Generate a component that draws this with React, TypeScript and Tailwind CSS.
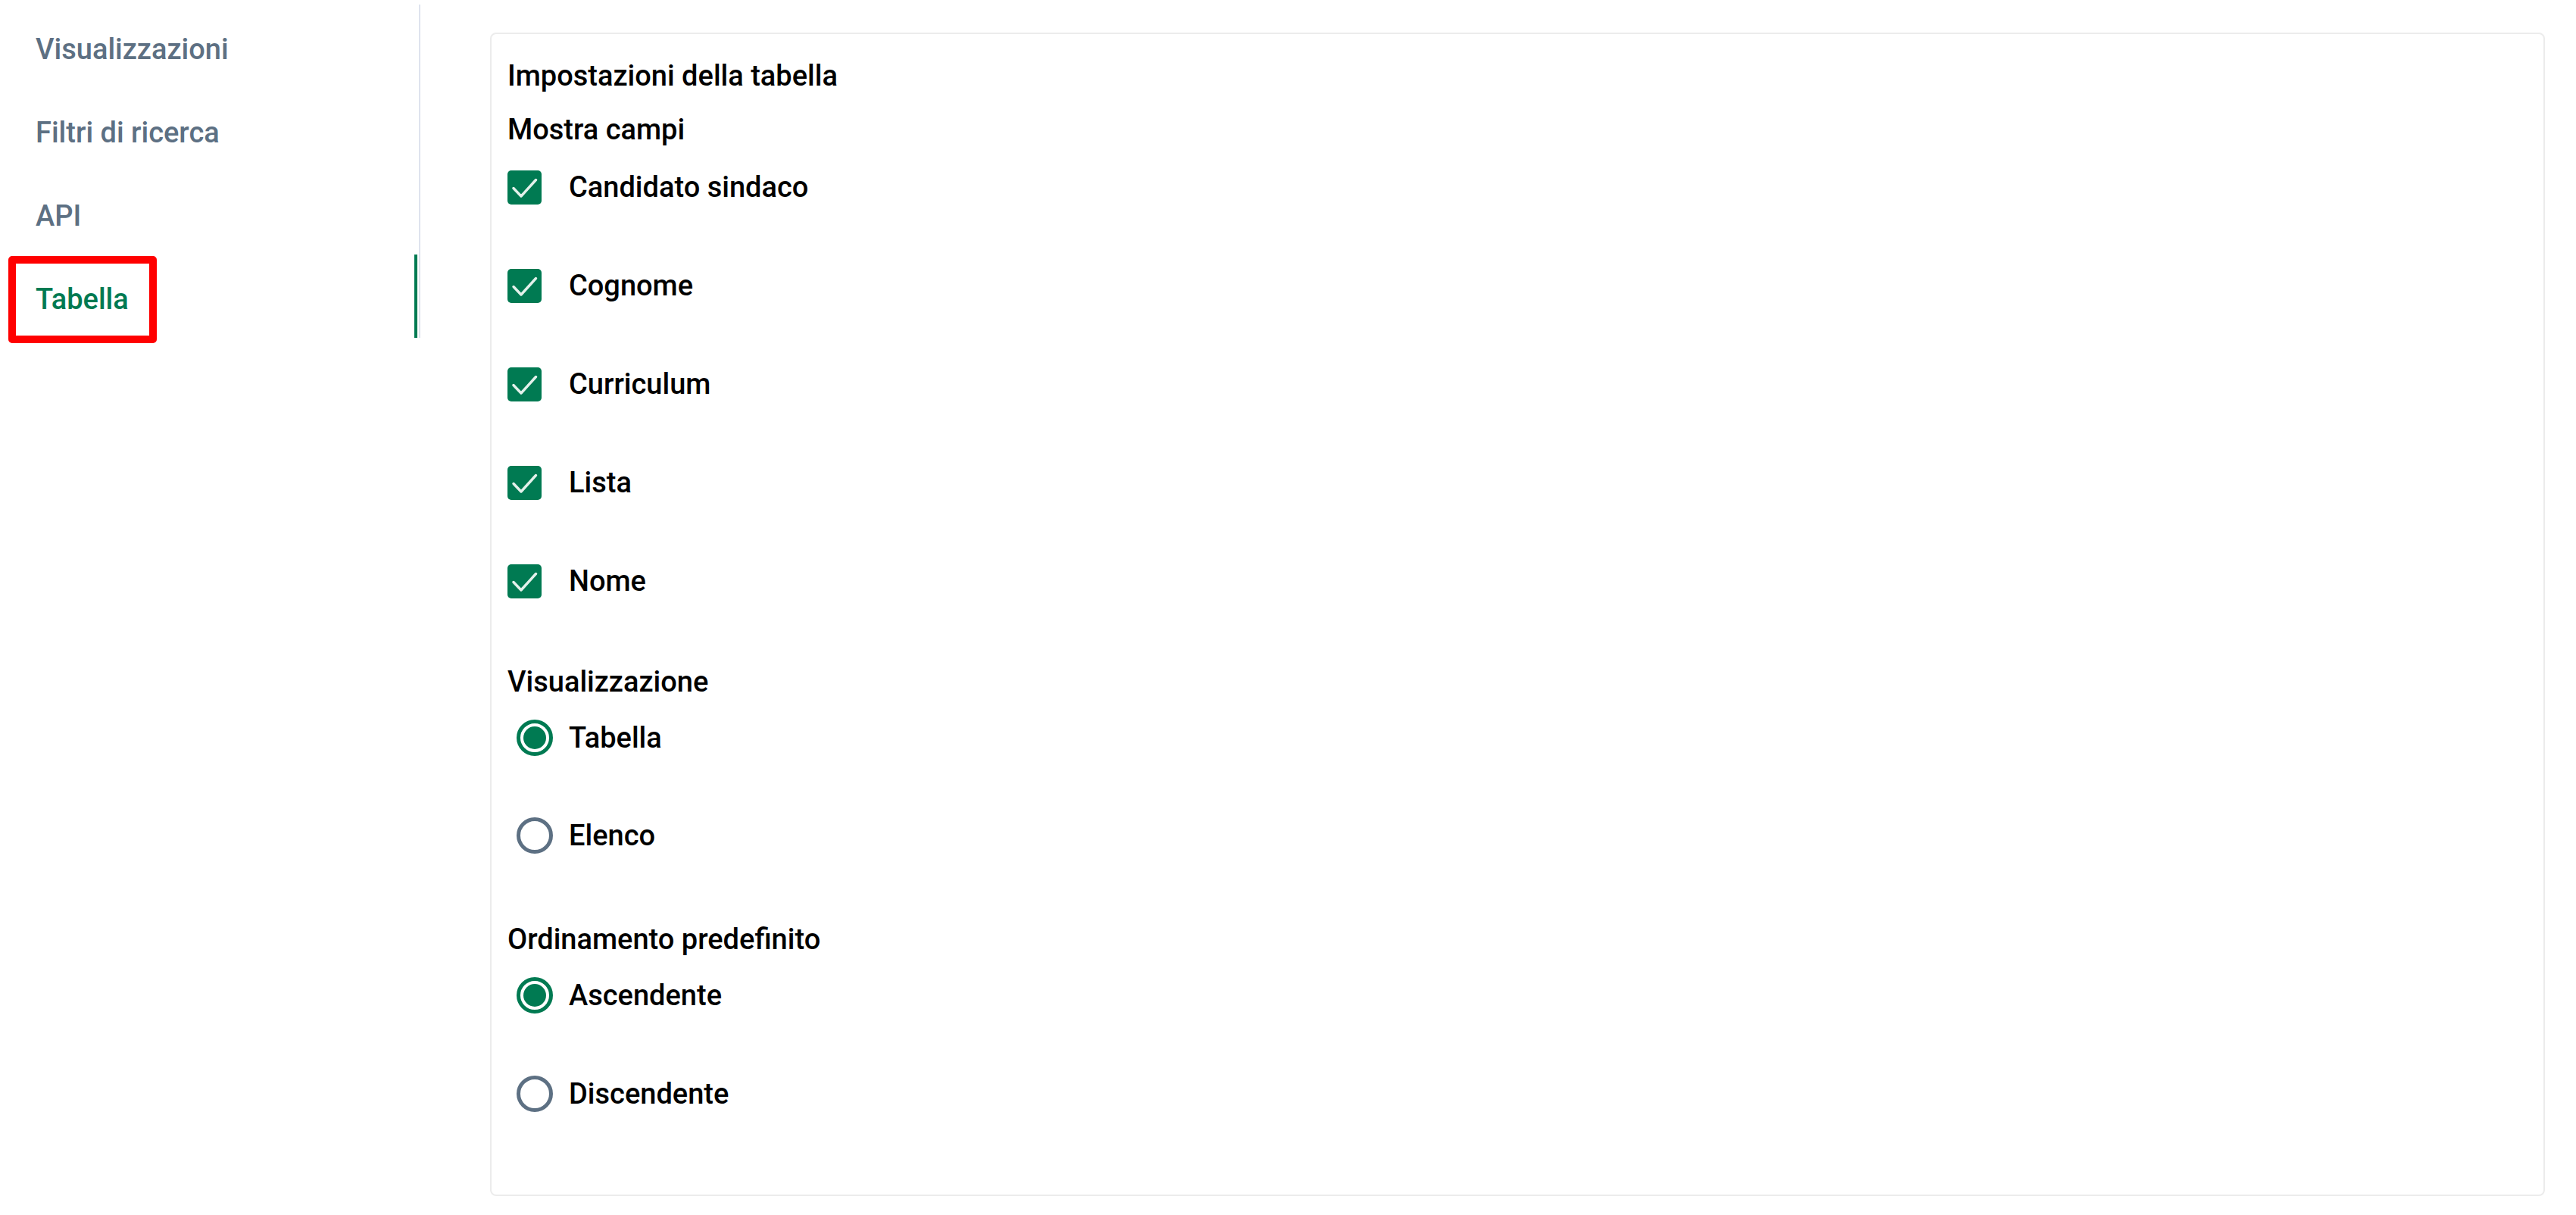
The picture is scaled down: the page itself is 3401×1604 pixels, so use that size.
import { useState } from "react"

const navItems = ["Visualizzazioni", "Filtri di ricerca", "API", "Tabella"]

const fields = ["Candidato sindaco", "Cognome", "Curriculum", "Lista", "Nome"]

function CheckboxRow({ label }: { label: string }) {
  return (
    <label className="flex h-[60px] items-center">
      <span className="flex h-[45px] w-[45px] shrink-0 items-center justify-center rounded-[5px] bg-[#007a52]">
        <svg width="45" height="45" viewBox="0 0 45 45" fill="none">
          <polyline
            points="8,23.5 18,34 37.5,12.5"
            stroke="#e3f1eb"
            strokeWidth="3.4"
            strokeLinecap="round"
            strokeLinejoin="round"
          />
        </svg>
      </span>
      <span className="ml-[36px] text-[38px] leading-[60px] font-medium text-black">{label}</span>
    </label>
  )
}

function RadioRow({
  label,
  checked,
  onSelect,
}: {
  label: string
  checked: boolean
  onSelect: () => void
}) {
  return (
    <label className="flex h-[60px] cursor-pointer items-center" onClick={onSelect}>
      <span
        className={
          checked
            ? "ml-[12px] flex h-[48px] w-[48px] shrink-0 items-center justify-center rounded-full border-[5px] border-[#007a52]"
            : "ml-[12px] flex h-[48px] w-[48px] shrink-0 items-center justify-center rounded-full border-[5px] border-[#5d7083]"
        }
      >
        {checked && <span className="h-[30px] w-[30px] rounded-full bg-[#007a52]" />}
      </span>
      <span className="ml-[21px] text-[38px] leading-[60px] font-medium text-black">{label}</span>
    </label>
  )
}

export default function App() {
  const [view, setView] = useState("Tabella")
  const [order, setOrder] = useState("Ascendente")

  return (
    <div className="relative flex min-h-screen bg-white font-['Roboto',sans-serif] antialiased">
      <aside className="w-[555px] shrink-0 pt-[6px]">
        <nav className="flex flex-col border-r-2 border-[#dfe3ee]">
          {navItems.map((item) => {
            const active = item === "Tabella"
            return (
              <div key={item} className="flex h-[110px] items-stretch">
                <a
                  href="#"
                  className={
                    active
                      ? "flex flex-1 items-center pl-[47px] pt-[8px] text-[38px] font-medium text-[#007a52]"
                      : "flex flex-1 items-center pl-[47px] pt-[8px] text-[38px] font-medium text-[#5d7083]"
                  }
                >
                  {item}
                </a>
                {active && <span className="mr-[2px] w-[4px] bg-[#007a52]" />}
              </div>
            )
          })}
        </nav>
      </aside>

      <main className="flex-1 pt-[43px] pl-[92px] pr-[41px] pb-[24px]">
        <section className="rounded-[8px] border-2 border-[#ececec] px-[21px] pt-[25px] pb-[103px]">
          <h2 className="text-[38px] leading-[60px] font-medium text-black">Impostazioni della tabella</h2>

          <h3 className="mt-[11px] text-[38px] leading-[60px] font-medium text-black">Mostra campi</h3>
          <div className="mt-[16px] flex flex-col gap-[70px]">
            {fields.map((f) => (
              <CheckboxRow key={f} label={f} />
            ))}
          </div>

          <h3 className="mt-[73px] text-[38px] leading-[60px] font-medium text-black">Visualizzazione</h3>
          <div className="mt-[14px] flex flex-col gap-[69px]">
            {["Tabella", "Elenco"].map((v) => (
              <RadioRow key={v} label={v} checked={view === v} onSelect={() => setView(v)} />
            ))}
          </div>

          <h3 className="mt-[77px] text-[38px] leading-[60px] font-medium text-black">Ordinamento predefinito</h3>
          <div className="mt-[14px] flex flex-col gap-[70px]">
            {["Ascendente", "Discendente"].map((o) => (
              <RadioRow key={o} label={o} checked={order === o} onSelect={() => setOrder(o)} />
            ))}
          </div>
        </section>
      </main>

      {/* annotation frame round the active tab */}
      <div className="pointer-events-none absolute left-[11px] top-[338px] h-[115px] w-[196px] rounded-[5px] border-[10px] border-[#ff0000]" />
    </div>
  )
}
